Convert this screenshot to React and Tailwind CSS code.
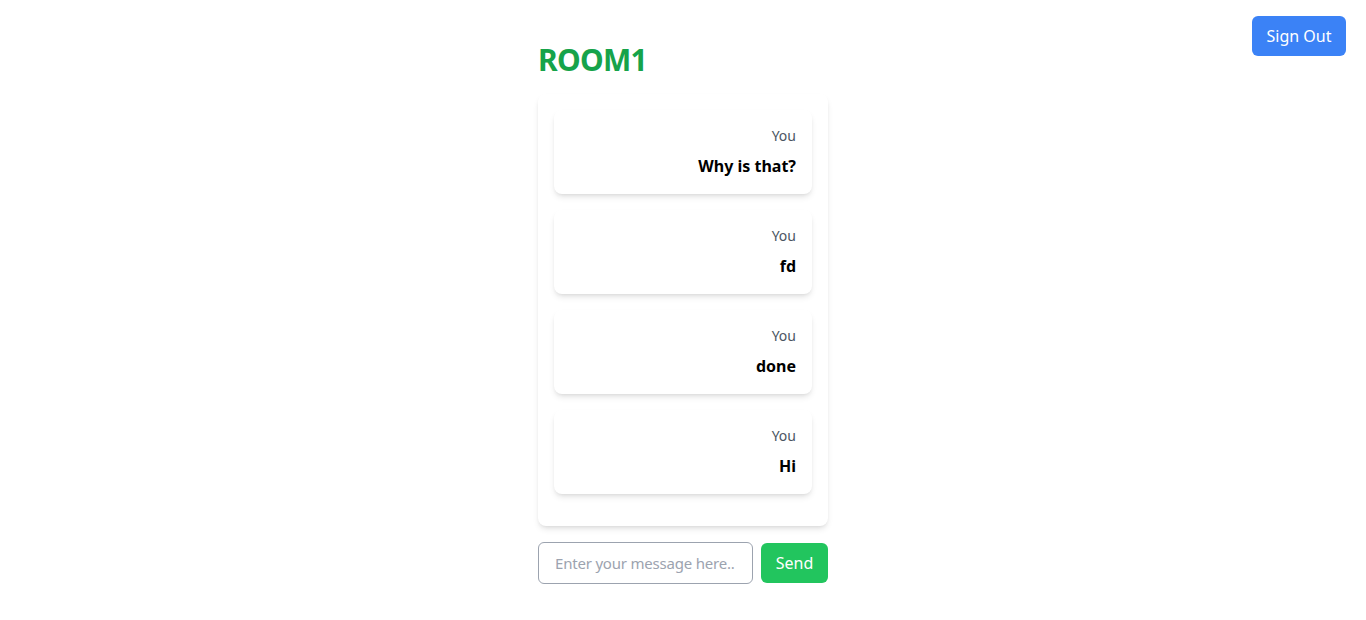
import React, { useState } from "react";

const messages = [
  { id: 1, sender: "You", text: "Why is that?" },
  { id: 2, sender: "You", text: "fd" },
  { id: 3, sender: "You", text: "done" },
  { id: 4, sender: "You", text: "Hi" },
];

const App = () => {
  const [msg, setMsg] = useState("");

  return (
    <div
      className="relative min-h-[620px] bg-white"
      style={{ fontFamily: '"Noto Sans", "Open Sans", sans-serif' }}
    >
      <button className="absolute top-4 right-5 w-[94px] h-10 rounded-md bg-[#3b82f6] text-white text-base">
        Sign Out
      </button>

      <div className="mx-auto w-[290px] pt-[42px]">
        <h1 className="text-3xl font-bold text-[#16a34a] mb-4 tracking-tight">ROOM1</h1>

        <div className="rounded-lg bg-white shadow-md p-4">
          {messages.map((m) => (
            <div
              key={m.id}
              className="mb-4 rounded-lg bg-white shadow-md p-4 text-right"
            >
              <p className="text-sm text-[#4b5563]">{m.sender}</p>
              <p className="mt-2 text-base font-bold text-black">{m.text}</p>
            </div>
          ))}
        </div>

        <div className="mt-4 flex gap-2">
          <input
            value={msg}
            onChange={(e) => setMsg(e.target.value)}
            placeholder="Enter your message here.."
            className="w-[215px] h-[42px] rounded-md border border-[#9ca3af] pl-4 pr-2 text-[15px] tracking-[-0.2px] placeholder:text-[#9ca3af] outline-none"
          />
          <button className="w-[67px] h-10 mt-px rounded-md bg-[#22c55e] text-white text-base">
            Send
          </button>
        </div>
      </div>
    </div>
  );
};

export default App;
